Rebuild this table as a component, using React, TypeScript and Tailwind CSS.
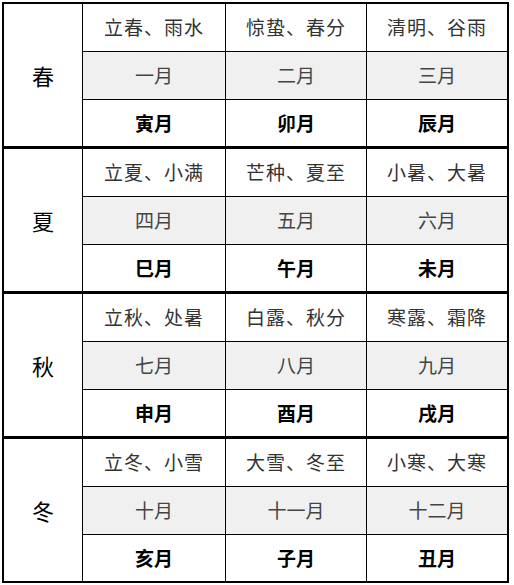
import React from "react";

const data = [
  { s: "春", terms: ["立春、雨水", "惊蛰、春分", "清明、谷雨"], months: ["一月", "二月", "三月"], zhi: ["寅月", "卯月", "辰月"] },
  { s: "夏", terms: ["立夏、小满", "芒种、夏至", "小暑、大暑"], months: ["四月", "五月", "六月"], zhi: ["巳月", "午月", "未月"] },
  { s: "秋", terms: ["立秋、处暑", "白露、秋分", "寒露、霜降"], months: ["七月", "八月", "九月"], zhi: ["申月", "酉月", "戌月"] },
  { s: "冬", terms: ["立冬、小雪", "大雪、冬至", "小寒、大寒"], months: ["十月", "十一月", "十二月"], zhi: ["亥月", "子月", "丑月"] },
];

const font = { fontFamily: '"Noto Sans CJK SC", "Noto Sans", sans-serif' };

export default function App() {
  return (
    <div className="w-[514px] h-[585px] bg-white pt-[2px] pl-[2px]" style={font}>
      <div className="w-[507px] border-2 border-black">
        {data.map((d, i) => (
          <div key={d.s} className={`flex h-[142px] ${i > 0 ? "border-t-[3px] border-black box-content" : ""}`}>
            <div className="w-[79px] border-r border-black flex items-center justify-center text-[22px] text-black">
              {d.s}
            </div>
            <div className="flex-1 grid grid-cols-[143px_141px_1fr] grid-rows-[48px_48px_46px]">
              {d.terms.map((t, j) => (
                <div key={t} className={`flex items-center justify-center border-b border-black text-[19px] text-[#333] tracking-[1px] ${j < 2 ? "border-r" : ""}`}>
                  {t}
                </div>
              ))}
              {d.months.map((t, j) => (
                <div key={t} className={`flex items-center justify-center border-b border-black bg-[#f0f0f0] text-[19px] text-[#444] ${j < 2 ? "border-r" : ""}`}>
                  {t}
                </div>
              ))}
              {d.zhi.map((t, j) => (
                <div key={t} className={`flex items-center justify-center border-black font-bold text-[19px] text-black ${j < 2 ? "border-r" : ""}`}>
                  {t}
                </div>
              ))}
            </div>
          </div>
        ))}
      </div>
    </div>
  );
}
